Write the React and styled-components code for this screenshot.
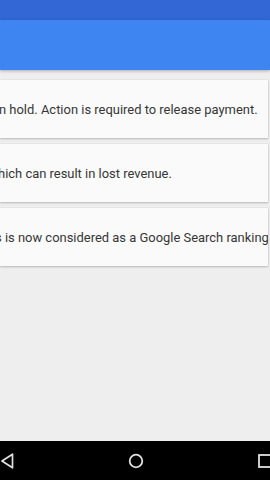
import React from 'react';
import styled, { createGlobalStyle } from 'styled-components';

const Global = createGlobalStyle`
  html, body {
    margin: 0;
    padding: 0;
    height: 100%;
    overflow: hidden;
  }
  #root {
    height: 100%;
  }
  * {
    box-sizing: border-box;
  }
`;

const Screen = styled.div`
  height: 100vh;
  display: flex;
  flex-direction: column;
  background: #eeeeee;
  font-family: Roboto, 'Liberation Sans', sans-serif;
`;

const StatusBar = styled.div`
  height: 20px;
  flex: 0 0 20px;
  background: #3367d6;
`;

const AppBar = styled.div`
  height: 50px;
  flex: 0 0 50px;
  background: #3e85f2;
  box-shadow: 0 1px 3px rgba(0, 0, 0, 0.28);
  position: relative;
  z-index: 1;
`;

const Content = styled.div`
  flex: 1;
  display: flex;
  flex-direction: column;
  gap: 6px;
  padding: 10px 2px 0 0;
`;

const Card = styled.div`
  height: 58px;
  background: #fafafa;
  box-shadow: 0 1px 2px rgba(0, 0, 0, 0.22), 0 0 1px rgba(0, 0, 0, 0.12);
  overflow: hidden;
  display: flex;
  align-items: center;
`;

const Line = styled.div`
  display: flex;
  white-space: nowrap;
  font-size: 12.95px;
  color: #363636;
  margin-left: ${({ shift }) => shift}px;
  padding-top: 1px;
`;

/* the start of the message is scrolled off to the left */
const Hidden = styled.span`
  flex: 0 0 0;
  width: 0;
  display: flex;
  justify-content: flex-end;
`;

const NavBar = styled.div`
  height: 39px;
  flex: 0 0 39px;
  background: #000;
  display: flex;
  align-items: center;
  justify-content: space-between;
  padding: 0 0 0 1px;

  svg {
    display: block;
  }
`;

const Back = () => (
  <svg width="13" height="16" viewBox="0 0 13 16">
    <path d="M11.5 1.2 L1 8 L11.5 14.8 Z" fill="none" stroke="#e0e0e0" strokeWidth="1.7" strokeLinejoin="round" />
  </svg>
);

const Home = () => (
  <svg width="16" height="16" viewBox="0 0 16 16">
    <circle cx="8" cy="8" r="6.3" fill="none" stroke="#e0e0e0" strokeWidth="1.8" />
  </svg>
);

const Recents = () => (
  <svg width="12" height="14" viewBox="0 0 12 14">
    <rect x="1" y="1" width="12" height="12" fill="none" stroke="#e0e0e0" strokeWidth="1.8" />
  </svg>
);

const alerts = [
  { hidden: 'Your payment is o', text: 'n hold. Action is required to release payment.', shift: -1 },
  { hidden: 'Some ad units are not optimized, w', text: 'hich can result in lost revenue.', shift: -2 },
  { hidden: 'Mobile-friendlines', text: 's is now considered as a Google Search ranking signal.', shift: -5 },
];

export default function App() {
  return (
    <>
      <Global />
      <Screen>
        <StatusBar />
        <AppBar />
        <Content>
          {alerts.map((a) => (
            <Card key={a.text}>
              <Line shift={a.shift}>
                <Hidden>{a.hidden}</Hidden>
                <span>{a.text}</span>
              </Line>
            </Card>
          ))}
        </Content>
        <NavBar>
          <Back />
          <Home />
          <Recents />
        </NavBar>
      </Screen>
    </>
  );
}
